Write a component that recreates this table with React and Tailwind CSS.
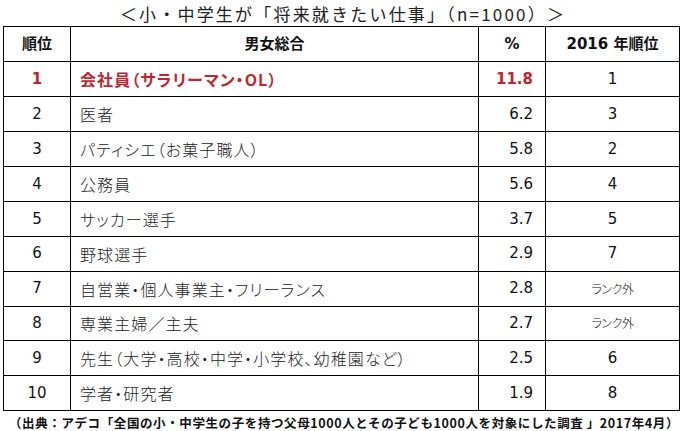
import React from 'react';

const ROWS = [
  { rank: '1', job: '会社員（サラリーマン・OL）', pct: '11.8', prev: '1', top: true },
  { rank: '2', job: '医者', pct: '6.2', prev: '3' },
  { rank: '3', job: 'パティシエ（お菓子職人）', pct: '5.8', prev: '2' },
  { rank: '4', job: '公務員', pct: '5.6', prev: '4' },
  { rank: '5', job: 'サッカー選手', pct: '3.7', prev: '5' },
  { rank: '6', job: '野球選手', pct: '2.9', prev: '7' },
  { rank: '7', job: '自営業・個人事業主・フリーランス', pct: '2.8', prev: 'ランク外' },
  { rank: '8', job: '専業主婦／主夫', pct: '2.7', prev: 'ランク外' },
  { rank: '9', job: '先生（大学・高校・中学・小学校、幼稚園など）', pct: '2.5', prev: '6' },
  { rank: '10', job: '学者・研究者', pct: '1.9', prev: '8' },
];

const font = "font-['DejaVu_Sans','Noto_Sans_CJK_JP',sans-serif]";

export default function App() {
  return (
    <div className={`w-[686px] h-[431px] bg-white text-[#111] ${font} flex flex-col overflow-hidden`}>
      {/* Title */}
      <div className="h-[26px] flex items-center justify-center text-[17px] leading-none font-['Noto_Sans_CJK_JP',sans-serif] tracking-[2.2px] text-[#222]">
        ＜小・中学生が「将来就きたい仕事」（n=1000）＞
      </div>

      {/* Table */}
      <div className="pl-[3px]">
        <table className="w-[676px] table-fixed border-collapse border-[1.5px] border-black">
          <colgroup>
            <col className="w-[67px]" />
            <col className="w-[408px]" />
            <col className="w-[67px]" />
            <col className="w-[134px]" />
          </colgroup>
          <thead>
            <tr className="h-[35.3px] text-[15px] font-bold">
              <th className="border-[1.5px] border-black text-center">順位</th>
              <th className="border-[1.5px] border-black text-center">男女総合</th>
              <th className="border-[1.5px] border-black text-center">%</th>
              <th className="border-[1.5px] border-black text-center">2016 年順位</th>
            </tr>
          </thead>
          <tbody>
            {ROWS.map((r) => (
              <tr key={r.rank} className={`h-[34.9px] ${r.top ? 'text-[#c0262d] font-bold' : ''}`}>
                <td className="border-[1.5px] border-black text-center text-[15px]">{r.rank}</td>
                <td
                  className={`border-[1.5px] border-black pl-[9px] text-[16px] tracking-[1.1px] [font-feature-settings:'palt'] font-['Noto_Sans_CJK_JP',sans-serif] whitespace-nowrap ${
                    r.top ? '' : 'font-light text-[#222]'
                  }`}
                >
                  {r.job}
                </td>
                <td className="border-[1.5px] border-black text-right pr-[12px] text-[15px]">{r.pct}</td>
                <td
                  className={`border-[1.5px] border-black text-center ${
                    r.prev === 'ランク外'
                      ? "text-[12px] font-light [font-feature-settings:'palt'] font-['Noto_Sans_CJK_JP',sans-serif] tracking-[-0.5px]"
                      : 'text-[15px] font-normal text-[#111]'
                  }`}
                >
                  {r.prev}
                </td>
              </tr>
            ))}
          </tbody>
        </table>
      </div>

      {/* Source */}
      <div className="pl-[9px] pt-[6px] text-[12.5px] leading-none font-bold whitespace-nowrap font-['Noto_Sans_CJK_JP',sans-serif] tracking-[0.6px]">
        （出典：アデコ「全国の小・中学生の子を持つ父母1000人とその子ども1000人を対象にした調査 」2017年4月）
      </div>
    </div>
  );
}
